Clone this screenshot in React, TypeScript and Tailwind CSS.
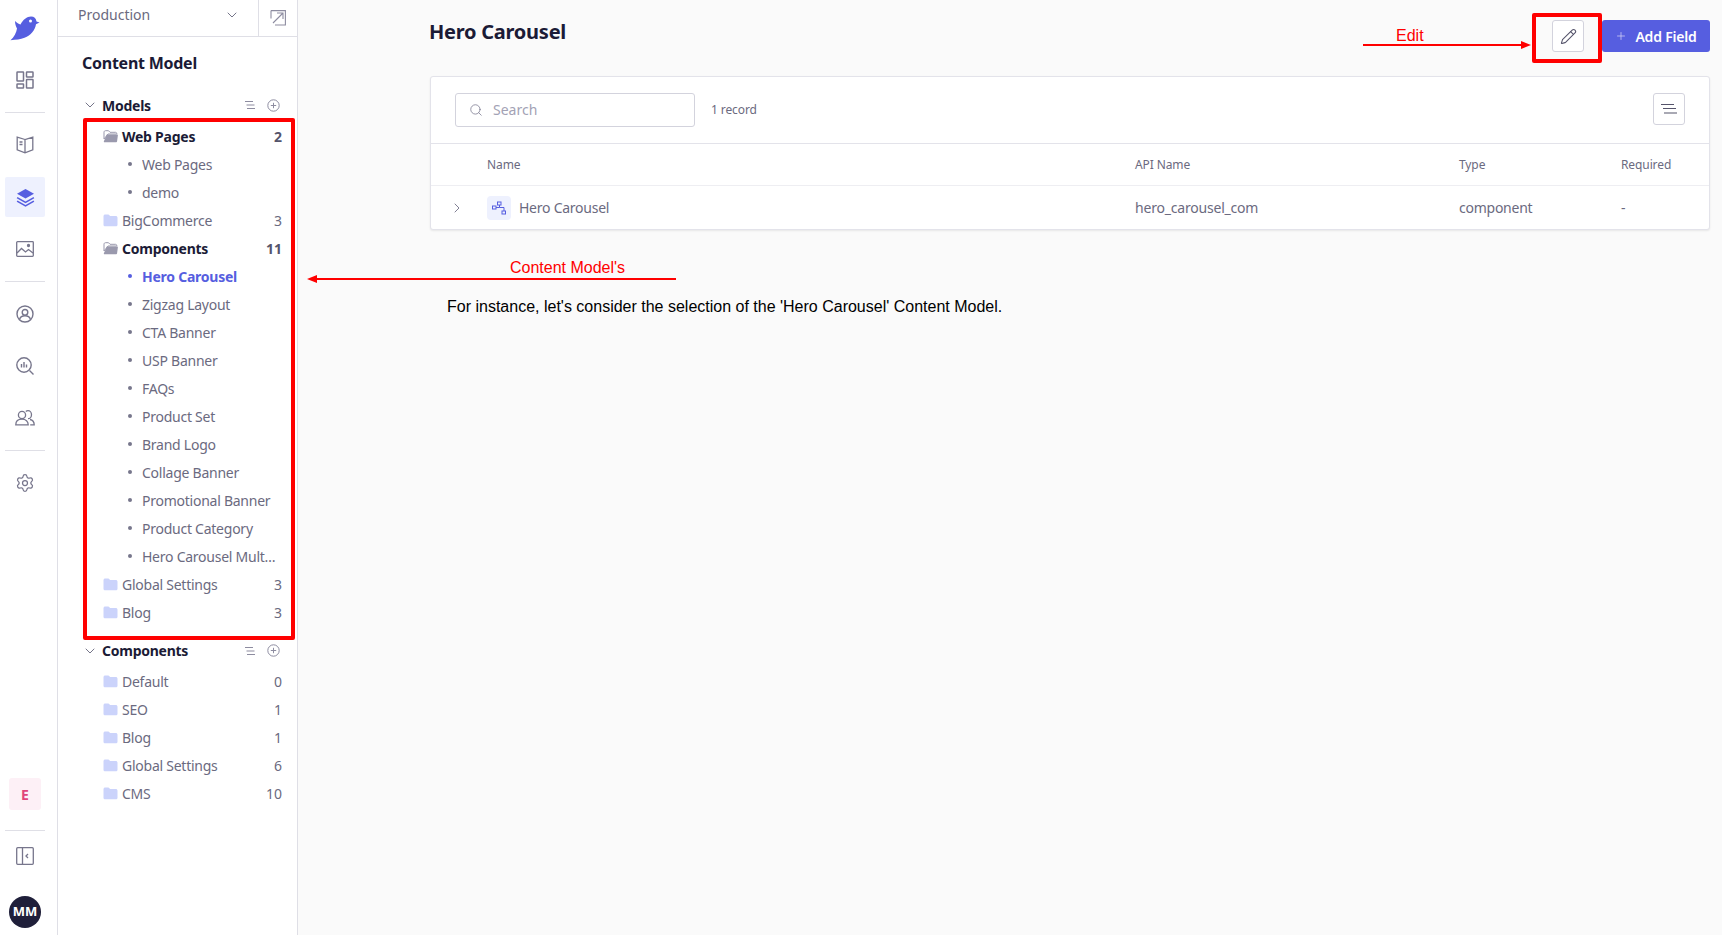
import React from "react";
import { ChevronDown, ChevronRight, Plus, Search, Settings, Pencil } from "lucide-react";

const FONT = "font-['Noto_Sans',sans-serif]";

const Folder = ({ open }: { open?: boolean }) =>
  open ? (
    <svg width="15" height="13" viewBox="0 0 15 13" className="shrink-0">
      <path d="M1 2.2C1 1.3 1.7.7 2.5.7h3l1.5 1.6h5.5c.8 0 1.3.6 1.3 1.3V4H5L1 9z" fill="none" stroke="#9a99ad" strokeWidth="1" />
      <path d="M3.8 4.4h10.4c.5 0 .8.4.7.9l-.8 6c-.1.6-.6 1-1.2 1H1.6c-.7 0-1-.5-.7-1.100z" fill="#9a99ad" />
    </svg>
  ) : (
    <svg width="15" height="13" viewBox="0 0 15 13" className="shrink-0">
      <path d="M0.500 2C.5 1 1.300.4 2.200.4h3.300l1.700 1.700h5.600c.9 0 1.700.7 1.700 1.600v7c0 .9-.8 1.600-1.700 1.600H2.200C1.300 12.300.5 11.600.5 10.700z" fill="#cbd3fb" />
    </svg>
  );

const FolderRow = ({ name, count, open }: { name: string; count: number; open?: boolean }) => (
  <div className="flex h-7 items-center pl-[23px] pr-[15px]">
    <Folder open={open} />
    <span className={`ml-[4px] flex-1 text-[14px] tracking-[-0.25px] ${open ? "font-bold text-[#1b1b36]" : "text-[#6b6a80]"}`}>{name}</span>
    <span className={`text-[14px] ${open ? "font-bold text-[#55546b]" : "text-[#6b6a80]"}`}>{count}</span>
  </div>
);

const Item = ({ name, active }: { name: string; active?: boolean }) => (
  <div className="flex h-7 items-center pl-[48px] pr-[15px]">
    <span className={`h-[4px] w-[4px] shrink-0 rounded-full ${active ? "bg-[#565ee0]" : "bg-[#77768c]"}`} />
    <span className={`ml-[10px] w-[137px] truncate text-[14px] tracking-[-0.25px] ${active ? "font-bold text-[#565ee0]" : "text-[#6b6a80]"}`}>{name}</span>
  </div>
);

const LinesIcon = ({ w = 12 }: { w?: number }) => (
  <svg width={w} height={w} viewBox="0 0 12 12" fill="none" stroke="#8d8ca0" strokeWidth="1.100">
    <path d="M1 2.500h8M2.500 6h8M3 9.500h8" />
  </svg>
);

const SectionHead = ({ title }: { title: string }) => (
  <div className="flex h-7 items-center pl-[4px] pr-[17px]">
    <ChevronDown size={16} strokeWidth={1.400} className="text-[#6b6a80]" />
    <span className="ml-[4px] flex-1 text-[14px] font-bold tracking-[-0.25px] text-[#1b1b36]">{title}</span>
    <LinesIcon />
    <svg width="13" height="13" viewBox="0 0 13 13" fill="none" stroke="#8d8ca0" strokeWidth="1" className="ml-[11px]">
      <circle cx="6.500" cy="6.500" r="5.700" />
      <path d="M6.500 3.800v5.400M3.800 6.500h5.400" />
    </svg>
  </div>
);

const Divider = ({ className = "" }: { className?: string }) => <div className={`mx-[5px] h-px shrink-0 bg-[#dfdfe6] ${className}`} />;

const RailSlot = ({ children, active }: { children: React.ReactNode; active?: boolean }) => (
  <div className={`mx-[5px] flex h-10 shrink-0 items-center justify-center rounded-[2px] ${active ? "bg-[#eef1fe]" : ""}`}>{children}</div>
);

const Rail = () => (
  <div className="h-full w-[58px] shrink-0 border-r border-[#dfdfe6] bg-white">
    <div className="flex h-full w-[50px] flex-col">
      <div className="flex h-[56px] shrink-0 items-center justify-center">
        <svg width="30" height="25" viewBox="0 0 30 25">
          <path d="M5 5c2 2 3.500 3 5.500 3.500C13 3.500 17 .5 21 .5c3.200 0 5 1.800 5.500 5l3 1-3.500 1.800c-1 6-5 11-11.500 13.500-4 1.500-8.500 2-14 2.500C4 21 6.500 16.500 7 12.500 6 10.500 5 8 5 5z" fill="#565ee0" />
          <circle cx="20.500" cy="5" r="1.500" fill="#fff" />
        </svg>
      </div>
      <div className="flex h-[48px] shrink-0 items-center justify-center">
        <svg width="18" height="18" viewBox="0 0 18 18" fill="none" stroke="#77768c" strokeWidth="1.500">
          <rect x="1" y="1" width="6.500" height="9" rx=".5" />
          <rect x="10.500" y="1" width="6.500" height="5" rx=".5" />
          <rect x="1" y="13" width="6.500" height="4" rx=".5" />
          <rect x="10.500" y="8.500" width="6.500" height="8.500" rx=".5" />
        </svg>
      </div>
      <Divider className="mt-[8px]" />
      <div className="mt-[12px] flex flex-col gap-3">
        <RailSlot>
          <svg width="18" height="18" viewBox="0 0 18 18" fill="none" stroke="#77768c" strokeWidth="1.300">
            <path d="M9 3.500 1.200 1.200v12.600L9 16.800l7.800-3V1.200zM9 3.500v13.300M3.500 6h3M3.500 8.500h3" />
          </svg>
        </RailSlot>
        <RailSlot active>
          <svg width="19" height="19" viewBox="0 0 19 19" fill="#565ee0">
            <path d="M9.500 1 18 5.800l-8.500 4.800L1 5.800z" />
            <path d="m1.500 9 8 4.500 8-4.500.8 1.200-8.800 5-8.800-5z" />
            <path d="m1.500 12.500 8 4.500 8-4.500.8 1.200-8.800 5-8.800-5z" />
          </svg>
        </RailSlot>
        <RailSlot>
          <svg width="18" height="16" viewBox="0 0 18 16" fill="none" stroke="#77768c" strokeWidth="1.300">
            <rect x=".7" y=".7" width="16.600" height="14.600" rx=".8" />
            <path d="m1 12 4.500-4.500 4 3.500 3-2.500 4.500 3.500" />
            <circle cx="12.500" cy="4.500" r="1" fill="#77768c" />
          </svg>
        </RailSlot>
      </div>
      <Divider className="mt-[12px]" />
      <div className="mt-[12px] flex flex-col gap-3">
        <RailSlot>
          <svg width="18" height="18" viewBox="0 0 18 18" fill="none" stroke="#77768c" strokeWidth="1.400">
            <circle cx="9" cy="9" r="8" />
            <circle cx="9" cy="7.300" r="2.800" />
            <path d="M3.500 14.500c.8-2.500 2.800-3.700 5.500-3.700s4.700 1.200 5.500 3.700" />
          </svg>
        </RailSlot>
        <RailSlot>
          <svg width="18" height="18" viewBox="0 0 18 18" fill="none" stroke="#77768c" strokeWidth="1.400">
            <circle cx="8" cy="8" r="7.200" />
            <path d="m13.500 13.500 4 4M5.500 7v3.500M8 5v5.500M10.500 7.500v3" />
          </svg>
        </RailSlot>
        <RailSlot>
          <svg width="20" height="16" viewBox="0 0 20 16" fill="none" stroke="#77768c" strokeWidth="1.300">
            <circle cx="7" cy="5" r="3.600" />
            <path d="M.8 14.800c0-3.600 2.400-5.600 6.200-5.600s6.200 2 6.200 5.600z" />
            <path d="M10.800 1.500c.6-.5 1.300-.8 2.200-.8 2 0 3.500 1.800 3.500 4s-1.500 4-3.500 4M15 9.500c2.600.6 4.200 2.500 4.200 5.300h-4" />
          </svg>
        </RailSlot>
      </div>
      <Divider className="mt-[12px]" />
      <div className="mt-[12px]">
        <RailSlot>
          <Settings size={20} strokeWidth={1.500} className="text-[#77768c]" />
        </RailSlot>
      </div>
      <div className="flex-1" />
      <div className="mx-[9px] flex h-8 shrink-0 items-center justify-center rounded-[3px] bg-[#fdf0f6] text-[14px] font-bold text-[#e0457b]">E</div>
      <Divider className="mt-[20px]" />
      <div className="mt-[8px] flex h-[34px] shrink-0 items-center justify-center">
        <svg width="18" height="18" viewBox="0 0 18 18" fill="none" stroke="#77768c" strokeWidth="1.300">
          <rect x=".7" y=".7" width="16.600" height="16.600" rx="1" />
          <path d="M6.500 1v16M12 7l-2 2 2 2" />
        </svg>
      </div>
      <div className="mx-[9px] mb-[7px] mt-[23px] flex h-8 shrink-0 items-center justify-center rounded-full bg-[#1f1f3a] text-[13px] font-bold text-white">MM</div>
    </div>
  </div>
);

const HERO_ITEMS = ["Zigzag Layout", "CTA Banner", "USP Banner", "FAQs", "Product Set", "Brand Logo", "Collage Banner", "Promotional Banner", "Product Category", "Hero Carousel Multiple"];

const Sidebar = () => (
  <div className="flex h-full w-[240px] shrink-0 flex-col border-r border-[#dfdfe6] bg-white">
    <div className="flex h-[37px] shrink-0 items-center border-b border-[#dfdfe6]">
      <div className="flex flex-1 items-center pb-[7px] pl-[20px] pr-[18px]">
        <span className="flex-1 text-[14px] text-[#6b6a80]">Production</span>
        <ChevronDown size={16} strokeWidth={1.400} className="text-[#6b6a80]" />
      </div>
      <div className="flex h-full w-[39px] items-center justify-center border-l border-[#dfdfe6]">
        <svg width="16" height="16" viewBox="0 0 16 16" fill="none" stroke="#8d8ca0" strokeWidth="1.100">
          <path d="M1 .6h14.400V15H5M1 .6v8M3 13 13 3M7 3h6v6" />
        </svg>
      </div>
    </div>
    <div className="pl-[22px] pr-0">
      <div className="flex h-[51px] items-center pl-[2px] text-[16px] font-bold tracking-[-0.25px] text-[#1b1b36]">Content Model</div>
      <div className="ml-[-2px] mt-[3px]">
        <SectionHead title="Models" />
      </div>
      <div className="mt-[3px]">
        <FolderRow name="Web Pages" count={2} open />
        <Item name="Web Pages" />
        <Item name="demo" />
        <FolderRow name="BigCommerce" count={3} />
        <FolderRow name="Components" count={11} open />
        <Item name="Hero Carousel" active />
        {HERO_ITEMS.map((n) => (
          <Item key={n} name={n} />
        ))}
        <FolderRow name="Global Settings" count={3} />
        <FolderRow name="Blog" count={3} />
      </div>
      <div className="ml-[-2px] mt-[10.500px]">
        <SectionHead title="Components" />
      </div>
      <div className="mt-[3px]">
        <FolderRow name="Default" count={0} />
        <FolderRow name="SEO" count={1} />
        <FolderRow name="Blog" count={1} />
        <FolderRow name="Global Settings" count={6} />
        <FolderRow name="CMS" count={10} />
      </div>
    </div>
  </div>
);

const COLS = "grid grid-cols-[56px_648px_324px_162px_1fr] items-center";

const Main = () => (
  <div className="min-w-0 flex-1 bg-[#fafafa] pl-[132px] pr-[12px]">
    <div className="flex h-[76px] items-start pt-[19px]">
      <h1 className="ml-[-1px] flex-1 text-[20px] font-bold leading-[26px] tracking-[-0.25px] text-[#1b1b36]">Hero Carousel</h1>
      <button className="mt-[1px] flex h-8 w-8 items-center justify-center rounded-[3px] border border-[#d3d3dd] bg-white">
        <Pencil size={17} strokeWidth={1.500} className="text-[#55546b]" />
      </button>
      <button className="ml-[18px] mt-[1px] flex h-8 w-[108px] items-center justify-center rounded-[3px] bg-[#565ee0] text-[14px] font-semibold tracking-[-0.2px] text-white">
        <Plus size={12} strokeWidth={1.500} className="mr-[8px] text-[#d3d0f5]" />
        Add Field
      </button>
    </div>
    <div className="rounded-[3px] border border-[#e3e3ea] bg-white shadow-[0_1px_2px_rgba(0,0,0,0.08)]">
      <div className="flex h-[67px] items-center border-b border-[#e3e3ea] pl-[24px] pr-[24px]">
        <div className="flex h-[34px] w-[240px] items-center rounded-[3px] border border-[#d3d3dd] pb-px pl-[13px]">
          <Search size={14} strokeWidth={1.300} className="text-[#77768c]" />
          <span className="ml-[10px] text-[14px] text-[#a3a2b5]">Search</span>
        </div>
        <span className="ml-[16px] flex-1 text-[12px] tracking-[-0.1px] text-[#6b6a80]">1 record</span>
        <button className="mb-[2px] flex h-8 w-8 items-center justify-center rounded-[3px] border border-[#d3d3dd]">
          <svg width="16" height="12" viewBox="0 0 16 12" fill="none" stroke="#55546b" strokeWidth="1.200">
            <path d="M0 1.500h13M2 5.500h13M3 10h13" />
          </svg>
        </button>
      </div>
      <div className={`${COLS} h-[42px] border-b border-[#eeeef2] text-[12px] tracking-[-0.1px] text-[#6b6a80]`}>
        <span />
        <span>Name</span>
        <span>API Name</span>
        <span>Type</span>
        <span>Required</span>
      </div>
      <div className={`${COLS} h-[43px] text-[14px] text-[#6b6a80]`}>
        <span className="pl-[18px]">
          <ChevronRight size={16} strokeWidth={1.400} className="text-[#77768c]" />
        </span>
        <span className="flex items-center">
          <span className="flex h-6 w-6 items-center justify-center rounded-[4px] bg-[#eef1fe]">
            <svg width="14" height="14" viewBox="0 0 14 14" fill="none" stroke="#565ee0" strokeWidth="1">
              <rect x=".5" y="5" width="3.500" height="3" />
              <rect x="5.500" y="1" width="3.500" height="3" />
              <rect x="10" y="10" width="3.500" height="3" />
              <path d="M4 6.500h3.500V4M7.500 6.500h4.500V10" />
            </svg>
          </span>
          <span className="ml-[8px] tracking-[-0.25px]">Hero Carousel</span>
        </span>
        <span className="tracking-[-0.2px]">hero_carousel_com</span>
        <span className="tracking-[-0.25px]">component</span>
        <span>-</span>
      </div>
    </div>
  </div>
);

const RedArrow = ({ className, left }: { className: string; left?: boolean }) => (
  <div className={`absolute flex h-[8px] items-center ${className}`}>
    {left && <span className="h-0 w-0 border-y-[4px] border-r-[10px] border-y-transparent border-r-[#f00]" />}
    <span className="h-[2px] flex-1 bg-[#f00]" />
    {!left && <span className="h-0 w-0 border-y-[4px] border-l-[10px] border-y-transparent border-l-[#f00]" />}
  </div>
);

// the red marks sit on top of the captured page
const Annotations = () => (
  <div className="pointer-events-none absolute inset-0 font-['Liberation_Sans',sans-serif]">
    <div className="absolute left-[83px] top-[118px] h-[522px] w-[212px] rounded-[2px] border-4 border-[#f00]" />
    <div className="absolute left-[1532px] top-[13px] h-[50px] w-[70px] rounded-[2px] border-4 border-[#f00]" />
    <span className="absolute left-[1396px] top-[27px] text-[16px] leading-[18px] text-[#f00]">Edit</span>
    <RedArrow className="left-[1363px] top-[41px] w-[168px]" />
    <span className="absolute left-[510px] top-[259px] text-[16px] leading-[18px] text-[#f00]">Content Model's</span>
    <RedArrow left className="left-[307px] top-[275px] w-[369px]" />
    <span className="absolute left-[447px] top-[298px] text-[16px] leading-[18px] text-black">For instance, let's consider the selection of the 'Hero Carousel' Content Model.</span>
  </div>
);

export default function App() {
  return (
    <div className={`relative flex h-[935px] w-[1722px] overflow-hidden ${FONT}`}>
      <Rail />
      <Sidebar />
      <Main />
      <Annotations />
    </div>
  );
}
